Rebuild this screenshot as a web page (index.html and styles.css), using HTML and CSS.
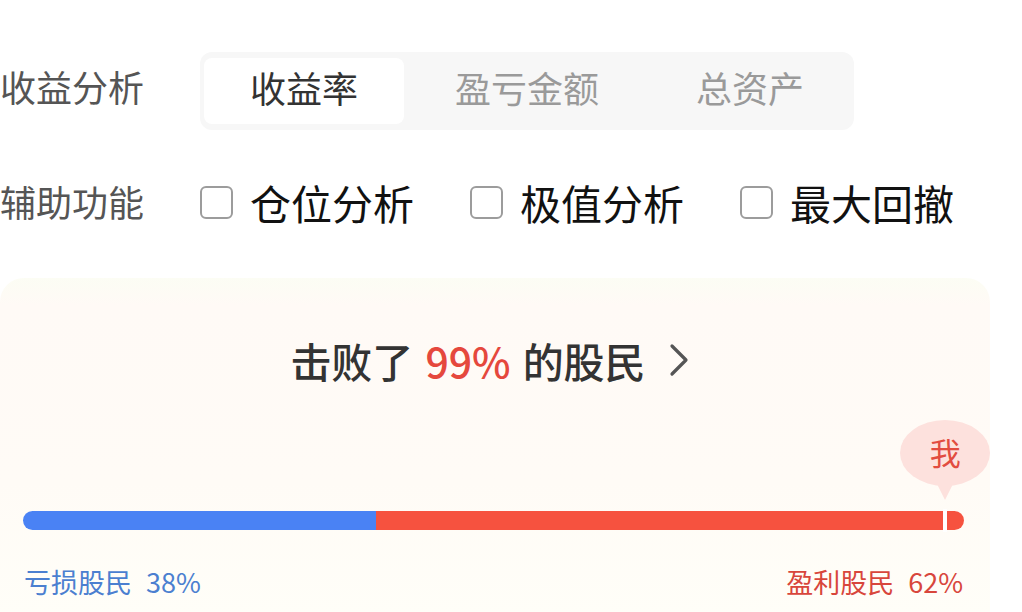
FILE: index.html
```html
<!DOCTYPE html>
<html lang="zh-CN">
<head>
  <meta charset="UTF-8">
  <meta name="viewport" content="width=device-width, initial-scale=1">
  <title>收益分析</title>
  <link rel="stylesheet" href="styles.css">
</head>
<body>
  <div class="row row-tabs">
    <div class="label">收益分析</div>
    <div class="seg">
      <div class="tab active">收益率</div>
      <div class="tab">盈亏金额</div>
      <div class="tab">总资产</div>
    </div>
  </div>

  <div class="row row-checks">
    <div class="label">辅助功能</div>
    <label class="check"><span class="box"></span>仓位分析</label>
    <label class="check"><span class="box"></span>极值分析</label>
    <label class="check"><span class="box"></span>最大回撤</label>
  </div>

  <div class="card">
    <div class="beat">
      击败了 <span class="hl">99%</span> 的股民
      <svg class="chev" width="22" height="36" viewBox="0 0 22 36"><path d="M4 4 L18 18 L4 32" fill="none" stroke="#555" stroke-width="3.2" stroke-linecap="round" stroke-linejoin="round"/></svg>
    </div>

    <div class="bar-wrap">
      <div class="bar">
        <div class="bar-loss" style="width: 37.5%"></div>
        <div class="bar-win"></div>
      </div>
      <div class="marker" style="left: 97.8%"></div>
      <div class="me" style="left: 97.8%">我</div>
    </div>

    <div class="legend">
      <div class="loss">亏损股民<span class="pct">38%</span></div>
      <div class="win">盈利股民<span class="pct">62%</span></div>
    </div>
  </div>
</body>
</html>
```

FILE: styles.css
```css
/* Global */
*, *::before, *::after { box-sizing: border-box; }
body {
  margin: 0;
  font-family: "Noto Sans CJK SC", "Noto Sans", sans-serif;
  background: #fff;
  overflow: hidden;
}

/* Rows */
.row { display: flex; align-items: center; }
.label { width: 200px; font-size: 36px; color: #555; line-height: 40px; }

.row-tabs { margin-top: 52px; }
.row-tabs .label { padding-bottom: 10px; }
.seg {
  display: flex;
  gap: 23px;
  padding: 6px 4px;
  background: #f7f7f7;
  border-radius: 12px;
}
.tab {
  width: 200px;
  height: 66px;
  display: flex;
  align-items: center;
  justify-content: center;
  padding-bottom: 9px;
  font-size: 36px;
  color: #9a9a9a;
  border-radius: 8px;
}
.tab.active { background: #fff; color: #333; }

.row-checks { margin-top: 46px; height: 52px; }
.row-checks .label { padding-bottom: 2px; }
.check {
  display: flex;
  align-items: center;
  gap: 17px;
  margin-right: 56px;
  font-size: 41px;
  color: #111;
  line-height: 52px;
}
.box {
  width: 33px;
  height: 33px;
  border: 2.5px solid #9c9c9c;
  border-radius: 6px;
  background: #fff;
}

/* Card */
.card {
  margin-top: 50px;
  width: 990px;
  height: 340px;
  border-radius: 24px 24px 0 0;
  background: linear-gradient(#fcfdf4, #fffaf6 8%, #fffbf6 60%, #fffef8);
  padding-top: 58px;
}
.beat {
  display: flex;
  align-items: center;
  justify-content: center;
  font-size: 41px;
  font-weight: 500;
  line-height: 48px;
  color: #333;
  padding-right: 10px;
}
.beat .hl { color: #e5483d; margin: 0 12px; }
.chev { margin-left: 22px; }

.bar-wrap {
  position: relative;
  margin: 127px 26px 0 23px;
}
.bar {
  display: flex;
  height: 19px;
  border-radius: 10px;
  overflow: hidden;
}
.bar-loss { background: #4a82f4; }
.bar-win { flex: 1; background: #f6523f; }
.marker {
  position: absolute;
  top: -2px;
  width: 4px;
  height: 23px;
  background: #fff;
}
.me {
  position: absolute;
  top: -91px;
  width: 90px;
  height: 66px;
  margin-left: -43px;
  padding-bottom: 4px;
  border-radius: 50%;
  background: #fde1dd;
  color: #e24c40;
  font-size: 31px;
  display: flex;
  align-items: center;
  justify-content: center;
}
.me::after {
  content: "";
  position: absolute;
  left: 37px;
  bottom: -14px;
  border-left: 8px solid transparent;
  border-right: 8px solid transparent;
  border-top: 16px solid #fde1dd;
}

/* Legend */
.legend {
  display: flex;
  justify-content: space-between;
  margin: 36px 27px 0 24px;
  font-size: 27px;
  line-height: 32px;
}
.legend .pct { margin-left: 14px; }
.loss { color: #4b7fd0; }
.win { color: #d8463c; }
```
